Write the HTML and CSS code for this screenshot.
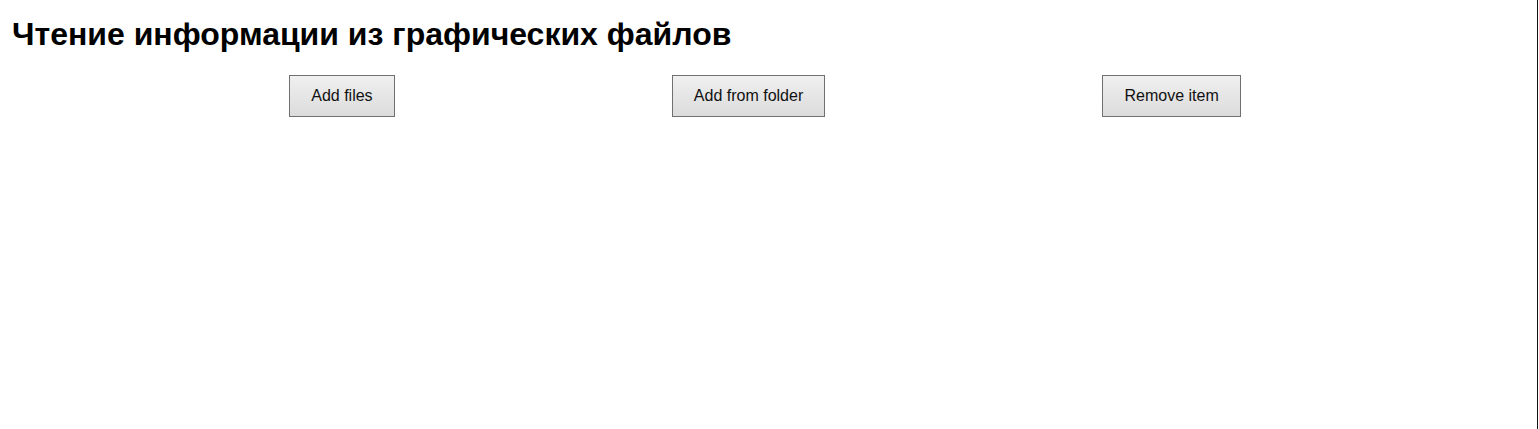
FILE: index.html
```html
<!DOCTYPE html>
<html lang="ru">
<head>
<meta charset="utf-8">
<title>Чтение информации из графических файлов</title>
<link rel="stylesheet" href="styles.css">
</head>
<body>
<div class="page">
  <h1 class="title">Чтение информации из графических файлов</h1>
  <div class="toolbar">
    <button class="btn" type="button">Add files</button>
    <button class="btn" type="button">Add from folder</button>
    <button class="btn" type="button">Remove item</button>
  </div>
</div>
<div class="edge"></div>
</body>
</html>
```
FILE: styles.css
```css
html, body {
  margin: 0;
  padding: 0;
  background: #ffffff;
  height: 100%;
}
body {
  font-family: "Liberation Sans", Arial, sans-serif;
  color: #000;
  overflow: hidden;
}
.page {
  padding: 0 0 0 12px;
  width: 1506px;
}
.title {
  margin: 0;
  padding-top: 16px;
  font-size: 32px;
  font-weight: bold;
  line-height: 36px;
}
.toolbar {
  display: flex;
  justify-content: space-evenly;
  margin-top: 23px;
}
.btn {
  height: 42px;
  padding: 0 21px;
  font-family: "Liberation Sans", Arial, sans-serif;
  font-size: 16px;
  color: #111;
  border: 1px solid #707070;
  border-radius: 0;
  background: linear-gradient(#f0f0f0, #dcdcdc);
}
.edge {
  position: fixed;
  top: 0;
  bottom: 0;
  left: 1537px;
  width: 1px;
  background: #111;
}
```
